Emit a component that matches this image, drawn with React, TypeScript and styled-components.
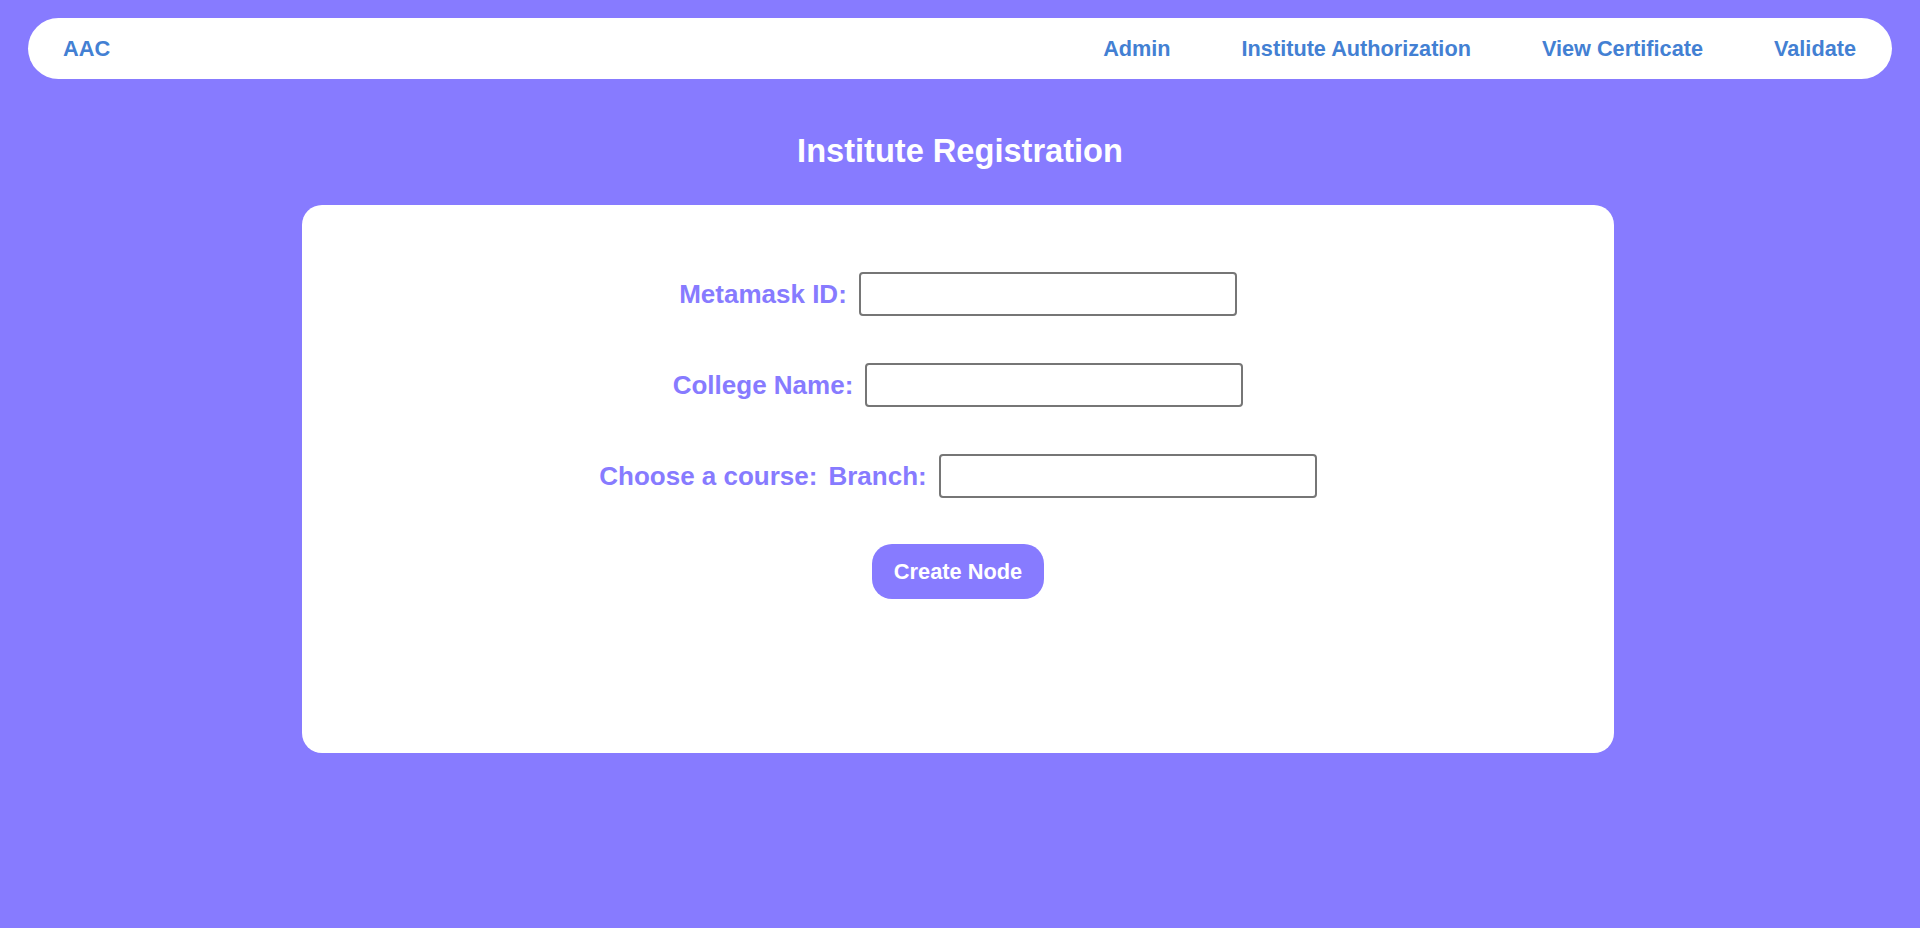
import React from "react";
import styled, { createGlobalStyle } from "styled-components";

const Global = createGlobalStyle`
  html, body {
    margin: 0;
    padding: 0;
    background: #877bff;
    font-family: "Liberation Sans", Arial, sans-serif;
  }
  #root { min-height: 928px; }
`;

const Page = styled.div`
  display: flex;
  flex-direction: column;
  align-items: stretch;
  padding-top: 18px;
`;

const Nav = styled.nav`
  display: flex;
  align-items: center;
  justify-content: space-between;
  height: 61px;
  margin: 0 28px;
  padding: 0 36px 0 35px;
  background: #ffffff;
  border-radius: 31px;
`;

const Brand = styled.a`
  font-size: 21.8px;
  font-weight: 700;
  color: #4380d3;
  text-decoration: none;
`;

const Links = styled.div`
  display: flex;
  align-items: center;
  gap: 71px;
`;

const NavLink = styled.a`
  font-size: 21.7px;
  font-weight: 700;
  color: #4380d3;
  text-decoration: none;
  cursor: pointer;
`;

const Title = styled.h1`
  margin: 53px 0 35px;
  text-align: center;
  font-size: 32.6px;
  line-height: 38px;
  font-weight: 700;
  color: #ffffff;
`;

const Card = styled.section`
  box-sizing: border-box;
  width: 1312px;
  height: 548px;
  margin: 0 0 0 calc(50% - 658px);
  padding-top: 67px;
  background: #ffffff;
  border-radius: 20px;
`;

const Form = styled.form`
  display: flex;
  flex-direction: column;
  align-items: center;
  gap: 47px;
`;

const Row = styled.div`
  display: flex;
  align-items: center;
  justify-content: center;
  gap: 11px;
  height: 44px;
`;

const Label = styled.label`
  font-size: 26px;
  font-weight: 700;
  color: #877bff;
  white-space: nowrap;
`;

const Input = styled.input`
  box-sizing: border-box;
  width: 378px;
  height: 44px;
  border: 2px solid #767676;
  border-radius: 4px;
  background: #ffffff;
  font-family: inherit;
  font-size: 18px;
  padding: 0 8px;
  margin-left: 1px;
`;

const Button = styled.button`
  box-sizing: border-box;
  width: 172px;
  height: 55px;
  margin-top: -1px;
  border: none;
  border-radius: 20px;
  background: #877bff;
  color: #ffffff;
  font-family: inherit;
  font-size: 21.8px;
  font-weight: 700;
  cursor: pointer;
`;

export default function App() {
  return (
    <>
      <Global />
      <Page>
        <Nav>
          <Brand>AAC</Brand>
          <Links>
            <NavLink>Admin</NavLink>
            <NavLink>Institute Authorization</NavLink>
            <NavLink>View Certificate</NavLink>
            <NavLink>Validate</NavLink>
          </Links>
        </Nav>
        <Title>Institute Registration</Title>
        <Card>
          <Form onSubmit={(e) => e.preventDefault()}>
            <Row>
              <Label htmlFor="mid">Metamask ID:</Label>
              <Input id="mid" type="text" />
            </Row>
            <Row>
              <Label htmlFor="cname">College Name:</Label>
              <Input id="cname" type="text" />
            </Row>
            <Row>
              <Label>Choose a course:</Label>
              <Label htmlFor="branch">Branch:</Label>
              <Input id="branch" type="text" />
            </Row>
            <Button type="submit">Create Node</Button>
          </Form>
        </Card>
      </Page>
    </>
  );
}
